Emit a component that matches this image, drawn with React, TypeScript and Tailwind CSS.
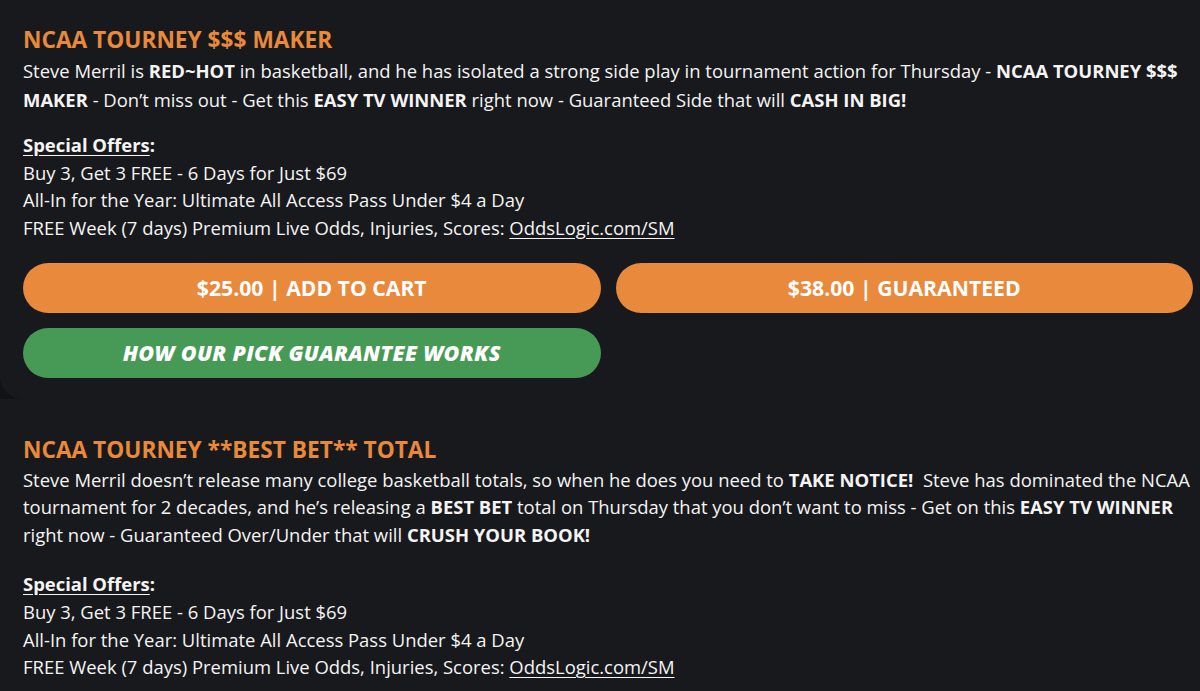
import React from "react";

const font = { fontFamily: '"Open Sans", "Liberation Sans", sans-serif' };

function Offers({ className }: { className: string }) {
  return (
    <div className={`${className} text-[18.45px] leading-[27.7px]`}>
      <p>
        <span className="font-bold underline underline-offset-[3px]">Special Offers</span>
        <span className="font-bold">:</span>
      </p>
      <p>Buy 3, Get 3 FREE - 6 Days for Just $69</p>
      <p>All-In for the Year: Ultimate All Access Pass Under $4 a Day</p>
      <p>
        FREE Week (7 days) Premium Live Odds, Injuries, Scores:{" "}
        <a className="underline underline-offset-[3px]">OddsLogic.com/SM</a>
      </p>
    </div>
  );
}

export default function App() {
  return (
    <div style={font} className="min-h-[691px] w-[1200px] overflow-hidden bg-[#111215] text-[#f4f4f4]">
      <section className="rounded-bl-[22px] bg-[#18191c] pb-[21px] pl-[23px] pr-[7px] pt-[24px]">
        <h2 className="text-[22.7px] font-bold leading-[32px] text-[#e8893b]">NCAA TOURNEY $$$ MAKER</h2>
        <p className="text-[18.45px] leading-[29px]">
          Steve Merril is <b>RED~HOT</b> in basketball, and he has isolated a strong side play in tournament
          action for Thursday - <b>NCAA TOURNEY $$$ MAKER</b> - Don’t miss out - Get this <b>EASY TV WINNER</b> right
          now - Guaranteed Side that will <b>CASH IN BIG!</b>
        </p>
        <Offers className="mt-[17px]" />
        <div className="mt-[21px] grid grid-cols-2 gap-x-[15px] gap-y-[15px]">
          <button className="h-[50px] rounded-full bg-[#e8893b] text-[21.2px] font-bold text-white">
            $25.00 | ADD TO CART
          </button>
          <button className="h-[50px] rounded-full bg-[#e8893b] text-[21.2px] font-bold text-white">
            $38.00 | GUARANTEED
          </button>
          <button className="h-[50px] rounded-full bg-[#479a56] text-[21.5px] font-extrabold italic tracking-[0.3px] text-white">
            HOW OUR PICK GUARANTEE WORKS
          </button>
        </div>
      </section>
      <section className="bg-[#18191c] pl-[23px] pr-[7px] pt-[35px] pb-[20px]">
        <h2 className="text-[22.7px] font-bold leading-[32px] text-[#e8893b]">NCAA TOURNEY **BEST BET** TOTAL</h2>
        <p className="text-[18.45px] leading-[27.5px]">
          Steve Merril doesn’t release many college basketball totals, so when he does you need to{" "}
          <b>TAKE NOTICE!</b>{"\u00a0 "}Steve has dominated the NCAA tournament for 2 decades, and he’s releasing a{" "}
          <b>BEST BET</b> total on Thursday that you don’t want to miss - Get on this <b>EASY TV WINNER</b> right now -
          Guaranteed Over/Under that will <b>CRUSH YOUR BOOK!</b>
        </p>
        <Offers className="mt-[22px]" />
      </section>
    </div>
  );
}
